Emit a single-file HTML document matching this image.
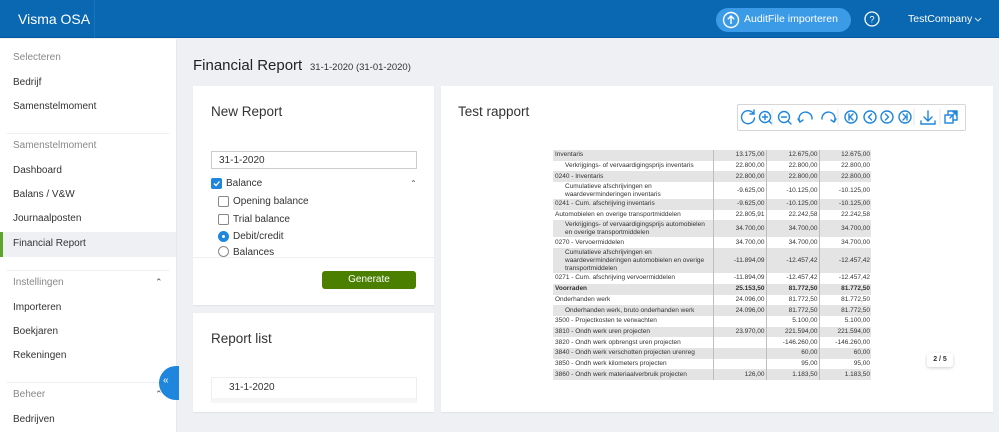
<!DOCTYPE html>
<html><head><meta charset="utf-8"><style>
*{box-sizing:border-box;margin:0;padding:0}
body{width:999px;height:432px;overflow:hidden;background:#eef0f4;font-family:"Liberation Sans",sans-serif;position:relative;color:#333}
.abs{position:absolute}
#hdr{left:0;top:0;width:999px;height:38px;background:#0a67b2;border-bottom:1px solid #0756a0}
#side{left:0;top:39px;width:176px;height:393px;background:#fff}
.si{position:absolute;left:13px;font-size:10px;color:#333}
.sh{position:absolute;left:13px;font-size:10px;color:#888}
.sep{position:absolute;left:7px;width:162px;height:1px;background:#eceef1}
.card{position:absolute;background:#fff;box-shadow:0 1px 1px rgba(0,0,0,.06)}
table{border-collapse:collapse;font-size:6.5px;color:#333;table-layout:fixed}
td{padding:0 1px 0 2px;line-height:8px;height:10.7px;vertical-align:middle;white-space:normal}
td.n{text-align:right;border-left:1.5px solid #bdbdbd}
tr:nth-child(odd) td{background:#e4e4e4}
td.i{padding-left:12px}
</style></head><body>
<div id="hdr" class="abs">
 <div class="abs" style="left:18px;top:11px;color:#fff;font-size:14px">Visma OSA</div>
 <div class="abs" style="left:94px;top:0;width:1px;height:38px;background:#1a74bb"></div>
 <div class="abs" style="left:716px;top:8px;width:135px;height:24px;border-radius:12px;background:#3b9be6"></div>
 <svg class="abs" style="left:722px;top:11px" width="18" height="18" viewBox="0 0 18 18"><circle cx="9" cy="9" r="7.5" fill="none" stroke="#fff" stroke-width="1.4"/><path d="M9 13V5M5.8 8.2L9 5l3.2 3.2" fill="none" stroke="#fff" stroke-width="1.4"/></svg>
 <div class="abs" style="left:744px;top:13px;color:#fff;font-size:10.5px">AuditFile importeren</div>
 <svg class="abs" style="left:864px;top:11px" width="16" height="16" viewBox="0 0 16 16"><circle cx="8" cy="8" r="7" fill="none" stroke="#fff" stroke-width="1.3"/><text x="8" y="11.5" font-size="9" text-anchor="middle" fill="#fff" font-family="Liberation Sans">?</text></svg>
 <div class="abs" style="left:908px;top:13px;color:#fff;font-size:10.5px">TestCompany</div>
 <svg class="abs" style="left:974px;top:17px" width="8" height="6" viewBox="0 0 8 6"><path d="M1 1l3 3 3-3" fill="none" stroke="#cfe3f5" stroke-width="1"/></svg>
</div>
<div id="side" class="abs">
 <div class="sh" style="top:13px">Selecteren</div>
 <div class="si" style="top:38px">Bedrijf</div>
 <div class="si" style="top:62px">Samenstelmoment</div>
 <div class="sep" style="top:94px"></div>
 <div class="sh" style="top:101px">Samenstelmoment</div>
 <div class="si" style="top:126px">Dashboard</div>
 <div class="si" style="top:150px">Balans / V&amp;W</div>
 <div class="si" style="top:174px">Journaalposten</div>
 <div class="abs" style="left:0;top:193px;width:176px;height:25px;background:#eef0f4"></div>
 <div class="abs" style="left:0;top:193px;width:3px;height:25px;background:#5ea32a"></div>
 <div class="si" style="top:199px">Financial Report</div>
 <div class="sep" style="top:231px"></div>
 <div class="sh" style="top:238px">Instellingen</div>
 <div class="abs" style="left:155px;top:238px;font-size:9px;color:#555">&#8963;</div>
 <div class="si" style="top:263px">Importeren</div>
 <div class="si" style="top:287px">Boekjaren</div>
 <div class="si" style="top:311px">Rekeningen</div>
 <div class="sep" style="top:343px"></div>
 <div class="sh" style="top:350px">Beheer</div>
 <div class="abs" style="left:155px;top:350px;font-size:9px;color:#555">&#8963;</div>
 <div class="si" style="top:375px">Bedrijven</div>
</div>
<div class="abs" style="left:176px;top:39px;width:1px;height:393px;background:#e6e8ec"></div>
<div class="abs" style="left:159px;top:366px;width:20px;height:34px;background:#1e86dd;border-radius:17px 0 0 17px"></div>
<div class="abs" style="left:163px;top:375px;color:#fff;font-size:10px">&laquo;</div>

<div class="abs" style="left:193px;top:57px;font-size:15px;color:#222">Financial Report</div>
<div class="abs" style="left:310px;top:62px;font-size:9.5px;color:#333">31-1-2020 (31-01-2020)</div>

<div class="card" style="left:193px;top:86px;width:241px;height:219px">
 <div class="abs" style="left:18px;top:18px;font-size:13.5px;color:#333">New Report</div>
 <div class="abs" style="left:18px;top:65px;width:206px;height:18px;border:1px solid #ccc;font-size:10px;padding:3px 7px">31-1-2020</div>
 <div class="abs" style="left:18px;top:92px;width:11px;height:11px;border-radius:2px;background:#1e86dd"></div>
 <svg class="abs" style="left:19px;top:93px" width="9" height="9" viewBox="0 0 9 9"><path d="M2 4.5l2 2 3.5-4" fill="none" stroke="#fff" stroke-width="1.3"/></svg>
 <div class="abs" style="left:33px;top:92px;font-size:10px">Balance</div>
 <div class="abs" style="left:217px;top:93px;font-size:8px;color:#555">&#8963;</div>
 <div class="abs" style="left:25px;top:110px;width:11px;height:11px;border:1px solid #888;border-radius:2px"></div>
 <div class="abs" style="left:40px;top:110px;font-size:10px">Opening balance</div>
 <div class="abs" style="left:25px;top:128px;width:11px;height:11px;border:1px solid #888;border-radius:2px"></div>
 <div class="abs" style="left:40px;top:128px;font-size:10px">Trial balance</div>
 <div class="abs" style="left:25px;top:145px;width:11px;height:11px;border-radius:50%;background:#1e86dd"></div>
 <div class="abs" style="left:29px;top:149px;width:3px;height:3px;border-radius:50%;background:#fff"></div>
 <div class="abs" style="left:40px;top:145px;font-size:10px">Debit/credit</div>
 <div class="abs" style="left:25px;top:160px;width:11px;height:11px;border:1px solid #888;border-radius:50%"></div>
 <div class="abs" style="left:40px;top:161px;font-size:10px">Balances</div>
 <div class="abs" style="left:0;top:171px;width:241px;height:48px;background:#fff;border-top:1px solid #f0f0f0"></div>
 <div class="abs" style="left:129px;top:185px;width:94px;height:18px;border-radius:3px;background:#4a7f00;color:#fff;font-size:10px;text-align:center;line-height:18px">Generate</div>
</div>

<div class="card" style="left:193px;top:313px;width:241px;height:99px">
 <div class="abs" style="left:18px;top:18px;font-size:13.5px;color:#333">Report list</div>
 <div class="abs" style="left:18px;top:64px;width:206px;height:26px;border:1px solid #eee;border-bottom:5px solid #f5f6f8;font-size:10px;padding:4px 17px">31-1-2020</div>
</div>

<div class="card" style="left:441px;top:86px;width:552px;height:326px">
 <div class="abs" style="left:17px;top:18px;font-size:13.5px;color:#333">Test rapport</div>
 <div class="abs" style="left:296px;top:18px;width:229px;height:27px;border:1px solid #d6d6d6;border-radius:2px"></div>
 <div class="abs" style="left:486px;top:267px;width:26px;height:14px;background:#fff;border-radius:3px;box-shadow:0 1px 3px rgba(0,0,0,.2);font-size:7px;font-weight:bold;text-align:center;line-height:14px">2 / 5</div>
</div>

<svg class="abs" style="left:737px;top:105px" width="228" height="26" viewBox="0 0 228 26" fill="none" stroke="#1e86dd" stroke-width="1.4" stroke-linecap="round">
 <path d="M16 8A6.5 6.5 0 1 0 17.5 13"/><path d="M17 5v4h-4"/>
 <circle cx="28" cy="12" r="5.5"/><path d="M32 16l3 3M28 9.5v5M25.5 12h5"/>
 <circle cx="47" cy="12" r="5.5"/><path d="M51 16l3 3M44.5 12h5"/>
 <path d="M63 17A6.5 6.5 0 1 1 75 14"/><path d="M61 14l2 3 3-2"/>
 <path d="M97 17A6.5 6.5 0 1 0 85 14"/><path d="M99 14l-2 3-3-2"/>
 <circle cx="114" cy="12" r="6"/><path d="M112 9v6M116 9l-3 3 3 3"/>
 <circle cx="133" cy="12" r="6"/><path d="M134.5 9l-3 3 3 3"/>
 <circle cx="150" cy="12" r="6"/><path d="M148.5 9l3 3-3 3"/>
 <circle cx="168" cy="12" r="6"/><path d="M166 9l3 3-3 3M170 9v6"/>
 <path d="M191 6v10M187 12l4 4 4-4M184 16v3h14v-3"/>
 <rect x="208" y="10" width="8" height="8"/><path d="M211 10V6h9v9h-4M213 13l6-6M216 7h3v3"/>
 <path d="M35 4v16M101 4v16M177 4v16M203 4v16" stroke="#e4e4e4" stroke-width="1"/>
</svg>

<table class="abs" style="left:553px;top:150px;width:318px">
<colgroup><col style="width:160px"><col style="width:53px"><col style="width:53px"><col style="width:52px"></colgroup>
<tr><td>Inventaris</td><td class="n">13.175,00</td><td class="n">12.675,00</td><td class="n">12.675,00</td></tr>
<tr><td class="i">Verkrijgings- of vervaardigingsprijs inventaris</td><td class="n">22.800,00</td><td class="n">22.800,00</td><td class="n">22.800,00</td></tr>
<tr><td>0240 - Inventaris</td><td class="n">22.800,00</td><td class="n">22.800,00</td><td class="n">22.800,00</td></tr>
<tr><td class="i" style="height:17px">Cumulatieve afschrijvingen en waardeverminderingen inventaris</td><td class="n">-9.625,00</td><td class="n">-10.125,00</td><td class="n">-10.125,00</td></tr>
<tr><td>0241 - Cum. afschrijving inventaris</td><td class="n">-9.625,00</td><td class="n">-10.125,00</td><td class="n">-10.125,00</td></tr>
<tr><td>Automobielen en overige transportmiddelen</td><td class="n">22.805,91</td><td class="n">22.242,58</td><td class="n">22.242,58</td></tr>
<tr><td class="i" style="height:17px">Verkrijgings- of vervaardigingsprijs automobielen en overige transportmiddelen</td><td class="n">34.700,00</td><td class="n">34.700,00</td><td class="n">34.700,00</td></tr>
<tr><td>0270 - Vervoermiddelen</td><td class="n">34.700,00</td><td class="n">34.700,00</td><td class="n">34.700,00</td></tr>
<tr><td class="i" style="height:25px">Cumulatieve afschrijvingen en waardeverminderingen automobielen en overige transportmiddelen</td><td class="n">-11.894,09</td><td class="n">-12.457,42</td><td class="n">-12.457,42</td></tr>
<tr><td>0271 - Cum. afschrijving vervoermiddelen</td><td class="n">-11.894,09</td><td class="n">-12.457,42</td><td class="n">-12.457,42</td></tr>
<tr style="font-weight:bold"><td>Voorraden</td><td class="n">25.153,50</td><td class="n">81.772,50</td><td class="n">81.772,50</td></tr>
<tr><td>Onderhanden werk</td><td class="n">24.096,00</td><td class="n">81.772,50</td><td class="n">81.772,50</td></tr>
<tr><td class="i">Onderhanden werk, bruto onderhanden werk</td><td class="n">24.096,00</td><td class="n">81.772,50</td><td class="n">81.772,50</td></tr>
<tr><td>3500 - Projectkosten te verwachten</td><td class="n"></td><td class="n">5.100,00</td><td class="n">5.100,00</td></tr>
<tr><td>3810 - Ondh werk uren projecten</td><td class="n">23.970,00</td><td class="n">221.594,00</td><td class="n">221.594,00</td></tr>
<tr><td>3820 - Ondh werk opbrengst uren projecten</td><td class="n"></td><td class="n">-146.260,00</td><td class="n">-146.260,00</td></tr>
<tr><td>3840 - Ondh werk verschotten projecten urenreg</td><td class="n"></td><td class="n">60,00</td><td class="n">60,00</td></tr>
<tr><td>3850 - Ondh werk kilometers projecten</td><td class="n"></td><td class="n">95,00</td><td class="n">95,00</td></tr>
<tr><td>3860 - Ondh werk materiaalverbruik projecten</td><td class="n">126,00</td><td class="n">1.183,50</td><td class="n">1.183,50</td></tr>
</table>
<div class="abs" style="left:441px;top:380px;width:552px;height:32px;background:#fff"></div>
</body></html>
